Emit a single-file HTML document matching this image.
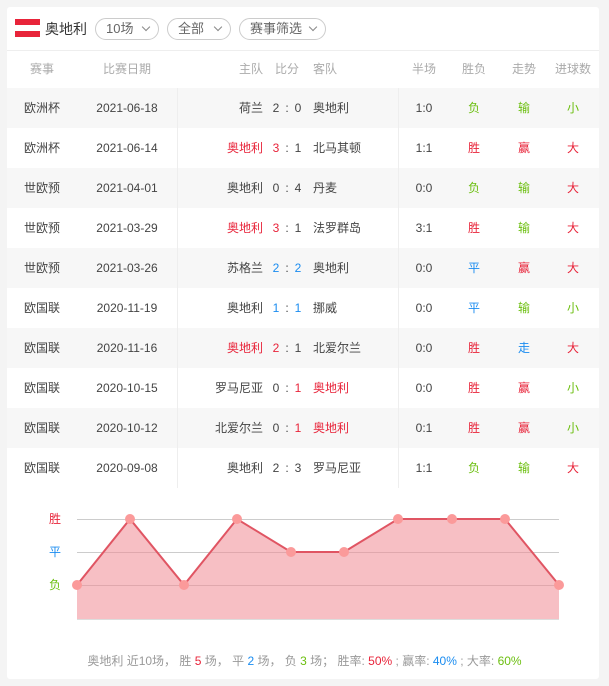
<!DOCTYPE html>
<html><head><meta charset="utf-8"><style>
*{margin:0;padding:0;box-sizing:border-box}
body{width:609px;height:686px;background:#f4f4f4;font-family:"Liberation Sans","Noto Sans CJK SC",sans-serif;font-size:12px;color:#444;position:relative;overflow:hidden}
.card{position:absolute;left:7px;top:7px;width:592px;height:672px;background:#fff;border-radius:3px}
.a{position:absolute;white-space:nowrap}
.pill{position:absolute;top:18px;height:22px;border:1px solid #ccc;border-radius:11px;color:#666;font-size:13px;line-height:20px;padding-left:10px}
.pill i{position:absolute;right:9px;top:5px;width:6px;height:6px;border-right:1px solid #888;border-bottom:1px solid #888;transform:rotate(45deg)}
.row{position:absolute;left:7px;width:592px;height:40px;line-height:40px}
.row .a{top:0}
.g{background:#f7f7f7}
.r{color:#e8243a}.gr{color:#6cbf10}.b{color:#1a8cf0}
.hd{color:#aaa;font-size:12px}
.c{transform:translateX(-50%)}
.rt{transform:translateX(-100%)}
</style></head><body>
<div class="card"></div>
<div class="a" style="left:15px;top:19px;width:25px;height:6px;background:#e8243a"></div>
<div class="a" style="left:15px;top:25px;width:25px;height:6px;background:#fff"></div>
<div class="a" style="left:15px;top:31px;width:25px;height:6px;background:#e8243a"></div>
<div class="a" style="left:45px;top:19px;font-size:14px;line-height:20px;color:#333">奥地利</div>
<div class="pill" style="left:95px;width:64px">10场<i></i></div>
<div class="pill" style="left:167px;width:64px">全部<i></i></div>
<div class="pill" style="left:239px;width:87px">赛事筛选<i></i></div>
<div class="a" style="left:7px;top:50px;width:592px;height:1px;background:#eee"></div>
<div class="row hd" style="top:50px;height:38px;line-height:38px">
<span class="a c" style="left:35px">赛事</span><span class="a c" style="left:120px">比赛日期</span>
<span class="a rt" style="left:256px">主队</span><span class="a c" style="left:280px">比分</span><span class="a" style="left:306px">客队</span>
<span class="a c" style="left:417px">半场</span><span class="a c" style="left:467px">胜负</span><span class="a c" style="left:517px">走势</span><span class="a c" style="left:566px">进球数</span>
</div>
<div id="rows"></div>
<div class="a" style="left:177px;top:88px;width:1px;height:400px;background:#eee"></div>
<div class="a" style="left:398px;top:88px;width:1px;height:400px;background:#eee"></div>
<svg class="a" style="left:0;top:0" width="609" height="686">
<g stroke="#ccc" stroke-width="1"><line x1="77" y1="519.5" x2="559" y2="519.5"/><line x1="77" y1="552.5" x2="559" y2="552.5"/><line x1="77" y1="585.5" x2="559" y2="585.5"/></g>
<polygon points="77,585 130,519 184,585 237,519 291,552 344,552 398,519 452,519 505,519 559,585 559,619 77,619" fill="#f08a94" fill-opacity="0.55"/>
<polyline points="77,585 130,519 184,585 237,519 291,552 344,552 398,519 452,519 505,519 559,585" fill="none" stroke="#e05563" stroke-width="2"/>
<g fill="#fb9a9a"><circle cx="77" cy="585" r="5"/><circle cx="130" cy="519" r="5"/><circle cx="184" cy="585" r="5"/><circle cx="237" cy="519" r="5"/><circle cx="291" cy="552" r="5"/><circle cx="344" cy="552" r="5"/><circle cx="398" cy="519" r="5"/><circle cx="452" cy="519" r="5"/><circle cx="505" cy="519" r="5"/><circle cx="559" cy="585" r="5"/></g>
<line x1="77" y1="619.5" x2="559" y2="619.5" stroke="#ddd"/>
<g font-family="Liberation Sans,Noto Sans CJK SC,sans-serif" font-size="12"><text x="49" y="523" fill="#e8243a">胜</text><text x="49" y="556" fill="#1a8cf0">平</text><text x="49" y="589" fill="#6cbf10">负</text></g>
</svg>
<div class="a" style="left:0;width:609px;text-align:center;top:652px;color:#999;font-size:12px">奥地利 近10场， 胜 <span class="r">5</span> 场， 平 <span class="b">2</span> 场， 负 <span class="gr">3</span> 场； 胜率: <span class="r">50%</span> ; 赢率: <span class="b">40%</span> ; 大率: <span class="gr">60%</span></div>
<script>
var d=[["欧洲杯","2021-06-18","荷兰","2","0","奥地利","1:0","负","输","小",0],
["欧洲杯","2021-06-14","奥地利","3","1","北马其顿","1:1","胜","赢","大",1],
["世欧预","2021-04-01","奥地利","0","4","丹麦","0:0","负","输","大",0],
["世欧预","2021-03-29","奥地利","3","1","法罗群岛","3:1","胜","输","大",1],
["世欧预","2021-03-26","苏格兰","2","2","奥地利","0:0","平","赢","大",3],
["欧国联","2020-11-19","奥地利","1","1","挪威","0:0","平","输","小",3],
["欧国联","2020-11-16","奥地利","2","1","北爱尔兰","0:0","胜","走","大",1],
["欧国联","2020-10-15","罗马尼亚","0","1","奥地利","0:0","胜","赢","小",2],
["欧国联","2020-10-12","北爱尔兰","0","1","奥地利","0:1","胜","赢","小",2],
["欧国联","2020-09-08","奥地利","2","3","罗马尼亚","1:1","负","输","大",0]];
var cm={"负":"gr","输":"gr","小":"gr","胜":"r","赢":"r","大":"r","平":"b","走":"b"};
var h="";
d.forEach(function(r,i){
var hc=r[10]==1?"r":"",ac=r[10]==2?"r":"",hs=r[10]==1?"r":(r[10]==3?"b":""),as=r[10]==2?"r":(r[10]==3?"b":"");
h+='<div class="row'+(i%2==0?' g':'')+'" style="top:'+(88+i*40)+'px">'+
'<span class="a c" style="left:35px">'+r[0]+'</span><span class="a c" style="left:120px">'+r[1]+'</span>'+
'<span class="a rt '+hc+'" style="left:256px">'+r[2]+'</span><span class="a c '+hs+'" style="left:269px">'+r[3]+'</span><span class="a c" style="left:280px">:</span><span class="a c '+as+'" style="left:291px">'+r[4]+'</span>'+
'<span class="a '+ac+'" style="left:306px">'+r[5]+'</span><span class="a c" style="left:417px">'+r[6]+'</span>'+
'<span class="a c '+cm[r[7]]+'" style="left:467px">'+r[7]+'</span><span class="a c '+cm[r[8]]+'" style="left:517px">'+r[8]+'</span><span class="a c '+cm[r[9]]+'" style="left:566px">'+r[9]+'</span></div>';});
document.getElementById("rows").innerHTML=h;
</script>
</body></html>
